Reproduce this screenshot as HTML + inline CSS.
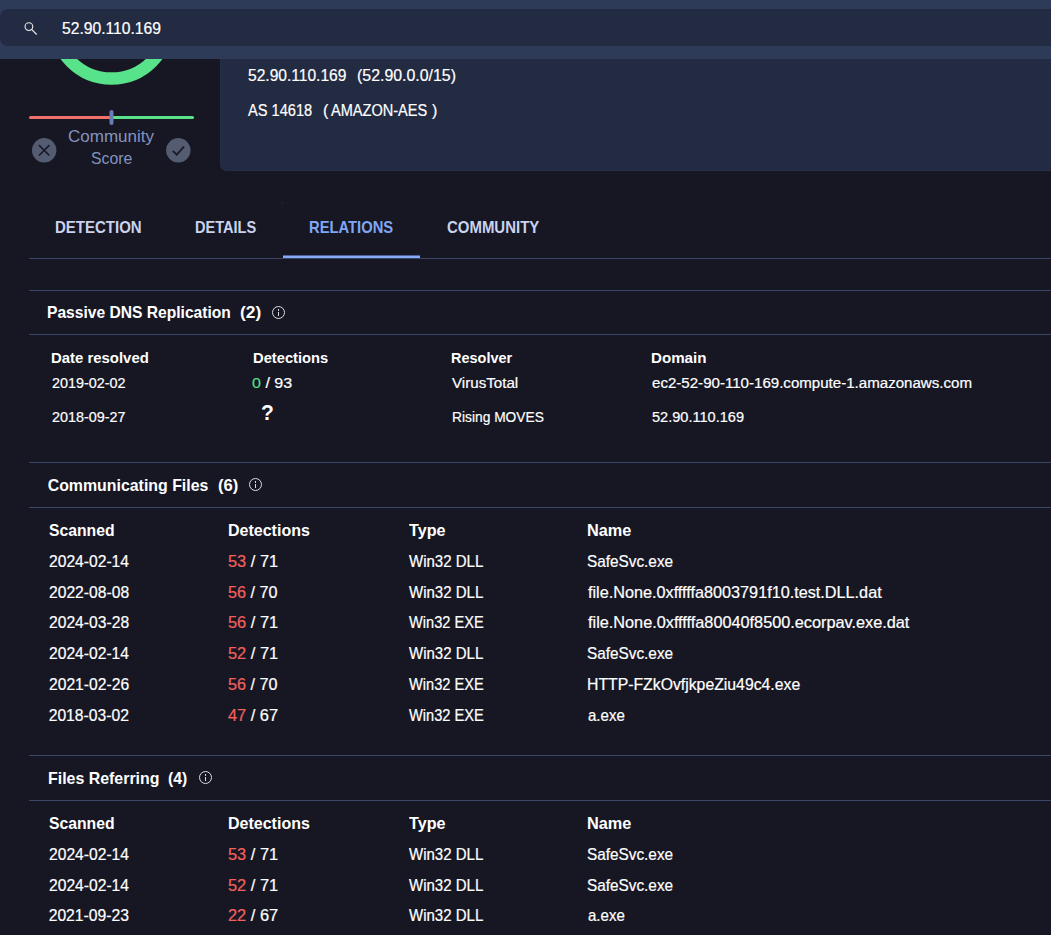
<!DOCTYPE html>
<html><head><meta charset="utf-8">
<style>
html,body{margin:0;padding:0;}
body{width:1051px;height:935px;overflow:hidden;background:#171724;position:relative;font-family:"Liberation Sans",sans-serif;color:#f2f3f5;}
.a{position:absolute;white-space:nowrap;line-height:1;transform-origin:0 0;}
.rg{-webkit-text-stroke:0.2px currentColor;}
.hl{position:absolute;left:29px;width:1022px;height:1px;background:#3a4667;}
.info{position:absolute;width:11.5px;height:11.5px;border:1.25px solid #dcdcdc;border-radius:50%;}
.info:before{content:"";position:absolute;left:5px;top:2.5px;width:1.5px;height:1.6px;background:#dcdcdc;}
.info:after{content:"";position:absolute;left:5px;top:5px;width:1.5px;height:4.2px;background:#dcdcdc;}
</style></head>
<body>
<svg class="a" style="left:0;top:0" width="220" height="180">
  <circle cx="111.5" cy="21.5" r="57" fill="none" stroke="#58e38b" stroke-width="12.5"/>
  <rect x="29" y="116" width="83" height="3" rx="1.5" fill="#f0716b"/>
  <rect x="111" y="116" width="83" height="3" rx="1.5" fill="#58e38b"/>
  <rect x="109.5" y="110" width="4" height="15" rx="2" fill="#6a7cb4"/>
  <circle cx="44.2" cy="150.3" r="12.2" fill="#545c72"/>
  <path d="M39 145.1 L49.4 155.5 M49.4 145.1 L39 155.5" stroke="#1a1b28" stroke-width="1.7" fill="none"/>
  <circle cx="178.3" cy="150.3" r="12.2" fill="#545c72"/>
  <path d="M172.8 150.8 L176.7 154.6 L184 146.6" stroke="#1a1b28" stroke-width="1.8" fill="none"/>
</svg>
<div class="a" style="left:220px;top:40px;width:831px;height:131px;background:#232b43;border-radius:0 0 0 7px;box-sizing:border-box;border-left:1px solid #262f48;border-bottom:1px solid #262f48;"></div>
<div class="a" style="left:0;top:0;width:1051px;height:59px;background:#2d3b58;"></div>
<div class="a" style="left:0;top:9px;width:1060px;height:37px;background:#232b43;border-radius:8px;"></div>
<svg class="a" style="left:20px;top:18px" width="22" height="22">
  <circle cx="8.9" cy="8.6" r="3.85" fill="none" stroke="#e8e8e8" stroke-width="1.15"/>
  <path d="M11.6 11.4 L16.7 16.5" stroke="#e8e8e8" stroke-width="1.2"/>
</svg>
<div class="a" style="left:283px;top:255px;width:137px;height:3px;background:linear-gradient(#4e6296 0,#4e6296 1px,#86abfa 1px,#86abfa 3px);"></div>
<div class="hl" style="top:258px;"></div>
<div class="a" style="left:282px;top:202px;width:1px;height:2px;background:#23283c;"></div>
<div class="hl" style="top:290px;"></div>
<div class="hl" style="top:334px;"></div>
<div class="info" style="left:271.9px;top:305.7px;"></div>
<div class="hl" style="top:462px;"></div>
<div class="hl" style="top:507px;"></div>
<div class="info" style="left:248.6px;top:477.7px;"></div>
<div class="hl" style="top:755px;"></div>
<div class="hl" style="top:800px;"></div>
<div class="info" style="left:198.5px;top:770.7px;"></div>
<div class="a rg" id="e0" style="left:62.18px;top:20.5px;font-size:15.7px;color:#ffffff;transform:scaleX(0.9977);">52.90.110.169</div>
<div class="a rg" id="e1" style="left:248.19px;top:68px;font-size:16px;color:#ffffff;transform:scaleX(0.9732);">52.90.110.169</div>
<div class="a rg" id="e2" style="left:356.80px;top:68px;font-size:16px;color:#ffffff;transform:scaleX(0.9931);">(52.90.0.0/15)</div>
<div class="a rg" id="e3" style="left:248.40px;top:103px;font-size:16px;color:#ffffff;transform:scaleX(0.9124);">AS 14618</div>
<div class="a rg" id="e4" style="left:322.90px;top:103px;font-size:16px;color:#ffffff;">(</div>
<div class="a rg" id="e5" style="left:331.22px;top:103px;font-size:16px;color:#ffffff;transform:scaleX(0.9087);">AMAZON-AES</div>
<div class="a rg" id="e6" style="left:431.99px;top:103px;font-size:16px;color:#ffffff;">)</div>
<div class="a" id="e7" style="left:68.43px;top:128.8px;font-size:16.6px;color:#8493be;transform:scaleX(1.0253);">Community</div>
<div class="a" id="e8" style="left:90.99px;top:151px;font-size:16.6px;color:#8493be;transform:scaleX(0.9536);">Score</div>
<div class="a" id="e9" style="left:55.45px;top:219px;font-size:16.4px;font-weight:bold;color:#c9d3ee;transform:scaleX(0.9147);">DETECTION</div>
<div class="a" id="e10" style="left:194.97px;top:219px;font-size:16.4px;font-weight:bold;color:#c9d3ee;transform:scaleX(0.8885);">DETAILS</div>
<div class="a" id="e11" style="left:309.20px;top:219px;font-size:16.4px;font-weight:bold;color:#80a6f4;transform:scaleX(0.9002);">RELATIONS</div>
<div class="a" id="e12" style="left:446.67px;top:219px;font-size:16.4px;font-weight:bold;color:#c9d3ee;transform:scaleX(0.9127);">COMMUNITY</div>
<div class="a" id="e13" style="left:47.44px;top:305px;font-size:15.9px;font-weight:bold;color:#ffffff;transform:scaleX(0.9820);">Passive DNS Replication</div>
<div class="a" id="e14" style="left:239.74px;top:305px;font-size:15.9px;font-weight:bold;color:#ffffff;transform:scaleX(1.0927);">(2)</div>
<div class="a" id="e15" style="left:51.44px;top:351px;font-size:14.8px;font-weight:bold;color:#ffffff;transform:scaleX(1.0076);">Date resolved</div>
<div class="a" id="e16" style="left:252.55px;top:351px;font-size:14.8px;font-weight:bold;color:#ffffff;transform:scaleX(0.9944);">Detections</div>
<div class="a" id="e17" style="left:451.48px;top:351px;font-size:14.8px;font-weight:bold;color:#ffffff;transform:scaleX(0.9777);">Resolver</div>
<div class="a" id="e18" style="left:651.43px;top:351px;font-size:14.8px;font-weight:bold;color:#ffffff;transform:scaleX(1.0224);">Domain</div>
<div class="a rg" id="e19" style="left:52.41px;top:375px;font-size:15.2px;color:#ffffff;transform:scaleX(0.9477);">2019-02-02</div>
<div class="a rg" id="e20" style="left:252.16px;top:375px;font-size:15.2px;color:#ffffff;transform:scaleX(1.0579);"><span style="color:#55df86">0</span> / 93</div>
<div class="a rg" id="e21" style="left:452.39px;top:375px;font-size:15.2px;color:#ffffff;transform:scaleX(0.9971);">VirusTotal</div>
<div class="a rg" id="e22" style="left:652.24px;top:375px;font-size:15.2px;color:#ffffff;transform:scaleX(0.9930);">ec2-52-90-110-169.compute-1.amazonaws.com</div>
<div class="a rg" id="e23" style="left:52.41px;top:408.8px;font-size:15.2px;color:#ffffff;transform:scaleX(0.9477);">2018-09-27</div>
<div class="a" id="e24" style="left:260.70px;top:401.5px;font-size:22px;font-weight:bold;color:#ffffff;transform:scaleX(0.9542);">?</div>
<div class="a rg" id="e25" style="left:451.50px;top:408.8px;font-size:15.2px;color:#ffffff;transform:scaleX(0.9077);">Rising MOVES</div>
<div class="a rg" id="e26" style="left:652.17px;top:408.8px;font-size:15.2px;color:#ffffff;transform:scaleX(0.9591);">52.90.110.169</div>
<div class="a" id="e27" style="left:47.68px;top:478px;font-size:15.9px;font-weight:bold;color:#ffffff;">Communicating Files</div>
<div class="a" id="e28" style="left:217.59px;top:478px;font-size:15.9px;font-weight:bold;color:#ffffff;transform:scaleX(1.0468);">(6)</div>
<div class="a" id="e29" style="left:48.90px;top:523px;font-size:15.9px;font-weight:bold;color:#ffffff;transform:scaleX(0.9902);">Scanned</div>
<div class="a" id="e30" style="left:228.42px;top:523px;font-size:15.9px;font-weight:bold;color:#ffffff;transform:scaleX(1.0076);">Detections</div>
<div class="a" id="e31" style="left:409.19px;top:523px;font-size:15.9px;font-weight:bold;color:#ffffff;transform:scaleX(1.0168);">Type</div>
<div class="a" id="e32" style="left:586.91px;top:523px;font-size:15.9px;font-weight:bold;color:#ffffff;transform:scaleX(1.0249);">Name</div>
<div class="a rg" id="e33" style="left:48.69px;top:554.2px;font-size:15.7px;color:#ffffff;transform:scaleX(0.9967);">2024-02-14</div>
<div class="a rg" id="e34" style="left:228.13px;top:554.2px;font-size:15.7px;color:#ffffff;transform:scaleX(1.0453);"><span style="color:#f3605e">53</span> / 71</div>
<div class="a rg" id="e35" style="left:408.73px;top:554.2px;font-size:15.7px;color:#ffffff;transform:scaleX(0.9566);">Win32 DLL</div>
<div class="a rg" id="e36" style="left:587.03px;top:554.2px;font-size:15.7px;color:#ffffff;transform:scaleX(0.9775);">SafeSvc.exe</div>
<div class="a rg" id="e37" style="left:48.68px;top:585.2px;font-size:15.7px;color:#ffffff;transform:scaleX(0.9980);">2022-08-08</div>
<div class="a rg" id="e38" style="left:228.14px;top:585.2px;font-size:15.7px;color:#ffffff;transform:scaleX(1.0301);"><span style="color:#f3605e">56</span> / 70</div>
<div class="a rg" id="e39" style="left:408.73px;top:585.2px;font-size:15.7px;color:#ffffff;transform:scaleX(0.9566);">Win32 DLL</div>
<div class="a rg" id="e40" style="left:587.92px;top:585.2px;font-size:15.7px;color:#ffffff;transform:scaleX(1.0338);">file.None.0xfffffa8003791f10.test.DLL.dat</div>
<div class="a rg" id="e41" style="left:48.68px;top:615.2px;font-size:15.7px;color:#ffffff;transform:scaleX(0.9980);">2024-03-28</div>
<div class="a rg" id="e42" style="left:228.13px;top:615.2px;font-size:15.7px;color:#ffffff;transform:scaleX(1.0453);"><span style="color:#f3605e">56</span> / 71</div>
<div class="a rg" id="e43" style="left:408.72px;top:615.2px;font-size:15.7px;color:#ffffff;transform:scaleX(0.9312);">Win32 EXE</div>
<div class="a rg" id="e44" style="left:587.92px;top:615.2px;font-size:15.7px;color:#ffffff;transform:scaleX(1.0368);">file.None.0xfffffa80040f8500.ecorpav.exe.dat</div>
<div class="a rg" id="e45" style="left:48.69px;top:646.2px;font-size:15.7px;color:#ffffff;transform:scaleX(0.9967);">2024-02-14</div>
<div class="a rg" id="e46" style="left:228.13px;top:646.2px;font-size:15.7px;color:#ffffff;transform:scaleX(1.0453);"><span style="color:#f3605e">52</span> / 71</div>
<div class="a rg" id="e47" style="left:408.73px;top:646.2px;font-size:15.7px;color:#ffffff;transform:scaleX(0.9566);">Win32 DLL</div>
<div class="a rg" id="e48" style="left:587.03px;top:646.2px;font-size:15.7px;color:#ffffff;transform:scaleX(0.9775);">SafeSvc.exe</div>
<div class="a rg" id="e49" style="left:48.68px;top:677.4px;font-size:15.7px;color:#ffffff;transform:scaleX(0.9980);">2021-02-26</div>
<div class="a rg" id="e50" style="left:228.14px;top:677.4px;font-size:15.7px;color:#ffffff;transform:scaleX(1.0301);"><span style="color:#f3605e">56</span> / 70</div>
<div class="a rg" id="e51" style="left:408.72px;top:677.4px;font-size:15.7px;color:#ffffff;transform:scaleX(0.9312);">Win32 EXE</div>
<div class="a rg" id="e52" style="left:586.89px;top:677.4px;font-size:15.7px;color:#ffffff;transform:scaleX(1.0064);">HTTP-FZkOvfjkpeZiu49c4.exe</div>
<div class="a rg" id="e53" style="left:48.68px;top:708.2px;font-size:15.7px;color:#ffffff;">2018-03-02</div>
<div class="a rg" id="e54" style="left:228.22px;top:708.2px;font-size:15.7px;color:#ffffff;transform:scaleX(1.0435);"><span style="color:#f3605e">47</span> / 67</div>
<div class="a rg" id="e55" style="left:408.72px;top:708.2px;font-size:15.7px;color:#ffffff;transform:scaleX(0.9312);">Win32 EXE</div>
<div class="a rg" id="e56" style="left:587.73px;top:708.2px;font-size:15.7px;color:#ffffff;transform:scaleX(0.9584);">a.exe</div>
<div class="a" id="e57" style="left:47.53px;top:771px;font-size:15.9px;font-weight:bold;color:#ffffff;transform:scaleX(1.0020);">Files Referring</div>
<div class="a" id="e58" style="left:168.14px;top:771px;font-size:15.9px;font-weight:bold;color:#ffffff;transform:scaleX(0.9867);">(4)</div>
<div class="a" id="e59" style="left:48.90px;top:816px;font-size:15.9px;font-weight:bold;color:#ffffff;transform:scaleX(0.9902);">Scanned</div>
<div class="a" id="e60" style="left:228.42px;top:816px;font-size:15.9px;font-weight:bold;color:#ffffff;transform:scaleX(1.0076);">Detections</div>
<div class="a" id="e61" style="left:409.19px;top:816px;font-size:15.9px;font-weight:bold;color:#ffffff;transform:scaleX(1.0168);">Type</div>
<div class="a" id="e62" style="left:586.91px;top:816px;font-size:15.9px;font-weight:bold;color:#ffffff;transform:scaleX(1.0249);">Name</div>
<div class="a rg" id="e63" style="left:48.69px;top:847.2px;font-size:15.7px;color:#ffffff;transform:scaleX(0.9967);">2024-02-14</div>
<div class="a rg" id="e64" style="left:228.13px;top:847.2px;font-size:15.7px;color:#ffffff;transform:scaleX(1.0453);"><span style="color:#f3605e">53</span> / 71</div>
<div class="a rg" id="e65" style="left:408.73px;top:847.2px;font-size:15.7px;color:#ffffff;transform:scaleX(0.9566);">Win32 DLL</div>
<div class="a rg" id="e66" style="left:587.03px;top:847.2px;font-size:15.7px;color:#ffffff;transform:scaleX(0.9775);">SafeSvc.exe</div>
<div class="a rg" id="e67" style="left:48.69px;top:878.0px;font-size:15.7px;color:#ffffff;transform:scaleX(0.9967);">2024-02-14</div>
<div class="a rg" id="e68" style="left:228.13px;top:878.0px;font-size:15.7px;color:#ffffff;transform:scaleX(1.0453);"><span style="color:#f3605e">52</span> / 71</div>
<div class="a rg" id="e69" style="left:408.73px;top:878.0px;font-size:15.7px;color:#ffffff;transform:scaleX(0.9566);">Win32 DLL</div>
<div class="a rg" id="e70" style="left:587.03px;top:878.0px;font-size:15.7px;color:#ffffff;transform:scaleX(0.9775);">SafeSvc.exe</div>
<div class="a rg" id="e71" style="left:48.68px;top:908.4px;font-size:15.7px;color:#ffffff;">2021-09-23</div>
<div class="a rg" id="e72" style="left:228.16px;top:908.4px;font-size:15.7px;color:#ffffff;transform:scaleX(1.0449);"><span style="color:#f3605e">22</span> / 67</div>
<div class="a rg" id="e73" style="left:408.73px;top:908.4px;font-size:15.7px;color:#ffffff;transform:scaleX(0.9566);">Win32 DLL</div>
<div class="a rg" id="e74" style="left:587.73px;top:908.4px;font-size:15.7px;color:#ffffff;transform:scaleX(0.9584);">a.exe</div>
</body></html>
